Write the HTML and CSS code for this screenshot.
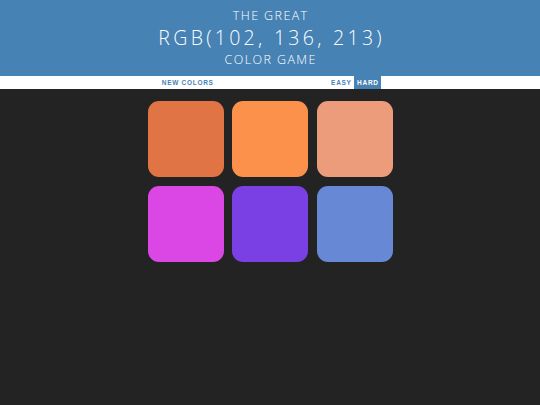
FILE: index.html
```html
<!DOCTYPE html>
<html>
<head>
<meta charset="utf-8">
<link rel="stylesheet" href="styles.css">
</head>
<body>
<header class="banner">
  <h1 class="title">
    <span class="title-small">THE GREAT</span>
    <span class="title-big">RGB(102, 136, 213)</span>
    <span class="title-small">COLOR GAME</span>
  </h1>
</header>
<nav class="stripe">
  <button class="btn">NEW COLORS</button>
  <span class="message"></span>
  <button class="btn">EASY</button>
  <button class="btn btn-selected">HARD</button>
</nav>
<main class="board">
  <div class="square sq1"></div>
  <div class="square sq2"></div>
  <div class="square sq3"></div>
  <div class="square sq4"></div>
  <div class="square sq5"></div>
  <div class="square sq6"></div>
</main>
</body>
</html>
```
FILE: styles.css
```css
html, body {
  margin: 0;
  padding: 0;
}
body {
  background: #232323;
  width: 540px;
  height: 405px;
  overflow: hidden;
  font-family: "Open Sans", "Liberation Sans", sans-serif;
}
.banner {
  background: #4682b4;
  height: 76px;
  color: #fff;
  text-align: center;
  box-sizing: border-box;
  padding-top: 5px;
}
.title {
  margin: 0;
  font-weight: 300;
  display: flex;
  flex-direction: column;
  align-items: center;
}
.title-small {
  font-size: 12.5px;
  line-height: 22px;
  letter-spacing: 1.4px;
  margin-right: -1.4px;
}
.title-big {
  font-size: 19.5px;
  line-height: 22px;
  letter-spacing: 3.3px;
  margin-right: -3.3px;
}
.stripe {
  background: #fff;
  height: 13px;
  display: flex;
  justify-content: center;
  align-items: stretch;
}
.btn {
  border: none;
  background: none;
  margin: 0;
  padding: 0 2.5px 0 3px;
  font-family: "Liberation Sans", Arial, sans-serif;
  font-weight: bold;
  font-size: 6.5px;
  letter-spacing: 0.7px;
  color: #4682b4;
  line-height: 13px;
  height: 13px;
}
.btn-selected {
  background: #4682b4;
  color: #fff;
}
.message {
  width: 112px;
}
.board {
  width: 253px;
  margin: 8px auto 0;
  display: grid;
  grid-template-columns: repeat(3, 76px);
  grid-auto-rows: 76px;
  gap: 8.5px;
  justify-content: center;
  padding-top: 4px;
}
.square {
  border-radius: 11px;
}
.sq1 { background: rgb(224, 116, 68); }
.sq2 { background: rgb(251, 145, 74); }
.sq3 { background: rgb(236, 156, 123); }
.sq4 { background: rgb(219, 71, 228); }
.sq5 { background: rgb(122, 64, 228); }
.sq6 { background: rgb(102, 136, 213); }
```
